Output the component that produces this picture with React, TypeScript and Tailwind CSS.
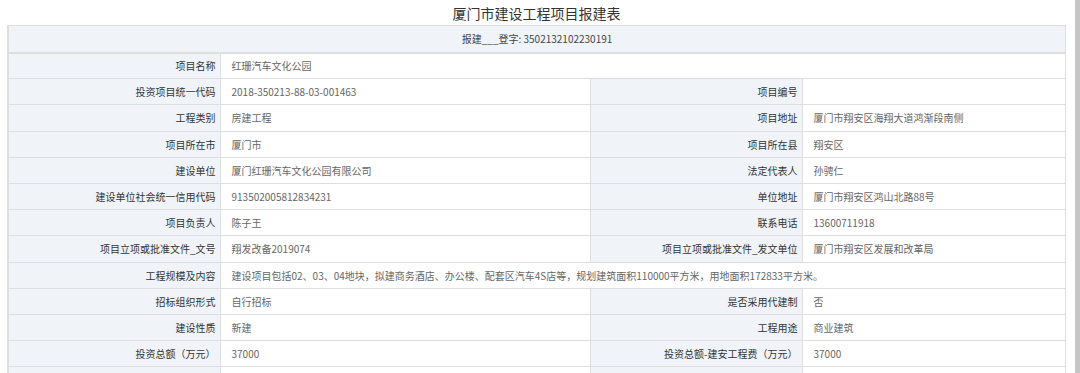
const rows: { l1: string; v1: string; l2?: string; v2?: string; full?: boolean }[] = [
  { l1: '项目名称', v1: '红珊汽车文化公园', full: true },
  { l1: '投资项目统一代码', v1: '2018-350213-88-03-001463', l2: '项目编号', v2: '' },
  { l1: '工程类别', v1: '房建工程', l2: '项目地址', v2: '厦门市翔安区海翔大道鸿渐段南侧' },
  { l1: '项目所在市', v1: '厦门市', l2: '项目所在县', v2: '翔安区' },
  { l1: '建设单位', v1: '厦门红珊汽车文化公园有限公司', l2: '法定代表人', v2: '孙骋仁' },
  { l1: '建设单位社会统一信用代码', v1: '913502005812834231', l2: '单位地址', v2: '厦门市翔安区鸿山北路88号' },
  { l1: '项目负责人', v1: '陈子王', l2: '联系电话', v2: '13600711918' },
  { l1: '项目立项或批准文件_文号', v1: '翔发改备2019074', l2: '项目立项或批准文件_发文单位', v2: '厦门市翔安区发展和改革局' },
  {
    l1: '工程规模及内容',
    v1: '建设项目包括02、03、04地块，拟建商务酒店、办公楼、配套区汽车4S店等，规划建筑面积110000平方米，用地面积172833平方米。',
    full: true,
  },
  { l1: '招标组织形式', v1: '自行招标', l2: '是否采用代建制', v2: '否' },
  { l1: '建设性质', v1: '新建', l2: '工程用途', v2: '商业建筑' },
  { l1: '投资总额（万元）', v1: '37000', l2: '投资总额-建安工程费（万元）', v2: '37000' },
  { l1: '', v1: '', l2: '', v2: '' },
]

const label = 'bg-[#f0f4f9] border border-[#dedede] text-right pr-[4px] text-[#333] whitespace-nowrap'
const value = 'bg-white border border-[#dedede] text-left pl-[11px] text-[#666] whitespace-nowrap'

export default function App() {
  return (
    <div
      className="flex h-[373px] w-[1080px] overflow-hidden bg-white"
      style={{ fontFamily: '"Noto Sans CJK SC", "Noto Sans", sans-serif' }}
    >
      <div className="flex-1 pl-[7px] pr-[9px]">
        <h1 className="h-[25px] text-center text-[14px] leading-[26px] text-[#333]">厦门市建设工程项目报建表</h1>
        <table className="w-full table-fixed border-collapse border-l-2 border-l-[#dedede] text-[10px]">
          <colgroup>
            <col className="w-[212px]" />
            <col className="w-[370px]" />
            <col className="w-[212px]" />
            <col />
          </colgroup>
          <tbody>
            <tr className="h-[27px]">
              <td colSpan={4} className="bg-[#f0f4f9] border border-[#dedede] border-b-2 text-center text-[#444]">
                报建___登字: 3502132102230191
              </td>
            </tr>
            {rows.map((r, i) => (
              <tr key={i} className="h-[26.2px]">
                <td className={label}>{r.l1}</td>
                {r.full ? (
                  <td colSpan={3} className={value}>{r.v1}</td>
                ) : (
                  <>
                    <td className={value}>{r.v1}</td>
                    <td className={label}>{r.l2}</td>
                    <td className={value}>{r.v2}</td>
                  </>
                )}
              </tr>
            ))}
          </tbody>
        </table>
      </div>
      <div className="w-[5px] bg-[#c6c6c6]" />
    </div>
  )
}
